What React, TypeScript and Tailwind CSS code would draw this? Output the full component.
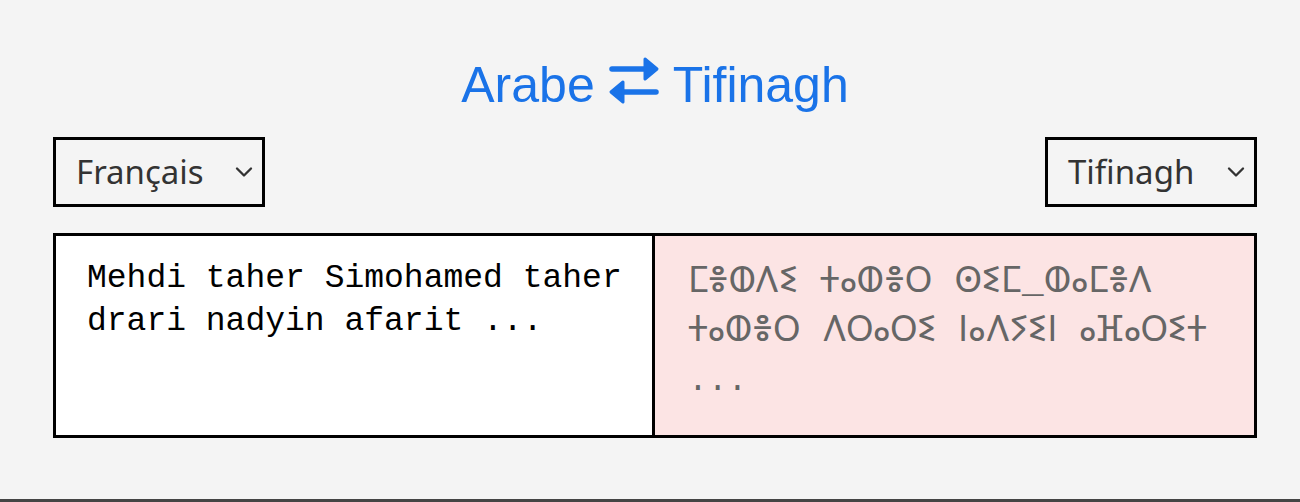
import { FiChevronDown } from "react-icons/fi";

const SOURCE = "Mehdi taher Simohamed taher drari nadyin afarit ...";
const TARGET = "ⵎⴻⵀⴷⵉ ⵜⴰⵀⴻⵔ ⵙⵉⵎ_ⵀⴰⵎⴻⴷ ⵜⴰⵀⴻⵔ ⴷⵔⴰⵔⵉ ⵏⴰⴷⵢⵉⵏ ⴰⴼⴰⵔⵉⵜ";

function SwapIcon() {
  return (
    <svg width="52" height="50" viewBox="0 0 52 50" fill="#1a73e8" stroke="#1a73e8" className="-mt-[8px]">
      <line x1="4" y1="13" x2="40" y2="13" strokeWidth="5.5" strokeLinecap="round" />
      <polygon points="37,3 49,13 37,23" strokeWidth="3" strokeLinejoin="round" />
      <line x1="12" y1="36" x2="48" y2="36" strokeWidth="5.5" strokeLinecap="round" />
      <polygon points="15,26 3,36 15,46" strokeWidth="3" strokeLinejoin="round" />
    </svg>
  );
}

function LangSelect({ label }: { label: string }) {
  return (
    <div className="w-[212px] h-[70px] border-[3px] border-black flex items-center justify-between pl-[20px] pr-[4px] text-[33px] text-[#333] font-['Noto_Sans',sans-serif]">
      <span>{label}</span>
      <FiChevronDown className="w-[28px] h-[28px] stroke-2" />
    </div>
  );
}

export default function App() {
  return (
    <div className="min-h-[502px] bg-[#f4f4f4] flex flex-col">
      <div className="flex-1 pl-[53px] pr-[43px] pt-[57px]">
        {/* Title */}
        <h1 className="h-[56px] flex items-center justify-center gap-[13px] text-[50px] leading-[56px] text-[#1a73e8] font-['Liberation_Sans',Arial,sans-serif]">
          <span>Arabe</span>
          <SwapIcon />
          <span>Tifinagh</span>
        </h1>

        {/* Language pickers */}
        <div className="mt-[24px] flex justify-between">
          <LangSelect label="Français" />
          <LangSelect label="Tifinagh" />
        </div>

        {/* Translation panel */}
        <div className="mt-[26px] h-[205px] border-[3px] border-black grid grid-cols-2 font-['Liberation_Mono','Noto_Sans_Tifinagh','DejaVu_Sans',monospace] text-[33px]">
          <div className="bg-white border-r-[3px] border-black pl-[31px] pr-[20px] pt-[21px] leading-[43px] text-black">
            {SOURCE}
          </div>
          <div className="bg-[#fce4e4] pl-[33px] pr-[20px] pt-[22px] text-[36px] leading-[49px] text-[#666]">
            {TARGET} <span className="text-[33px]">...</span>
          </div>
        </div>
      </div>
      <div className="h-[3px] bg-[#444]" />
    </div>
  );
}
